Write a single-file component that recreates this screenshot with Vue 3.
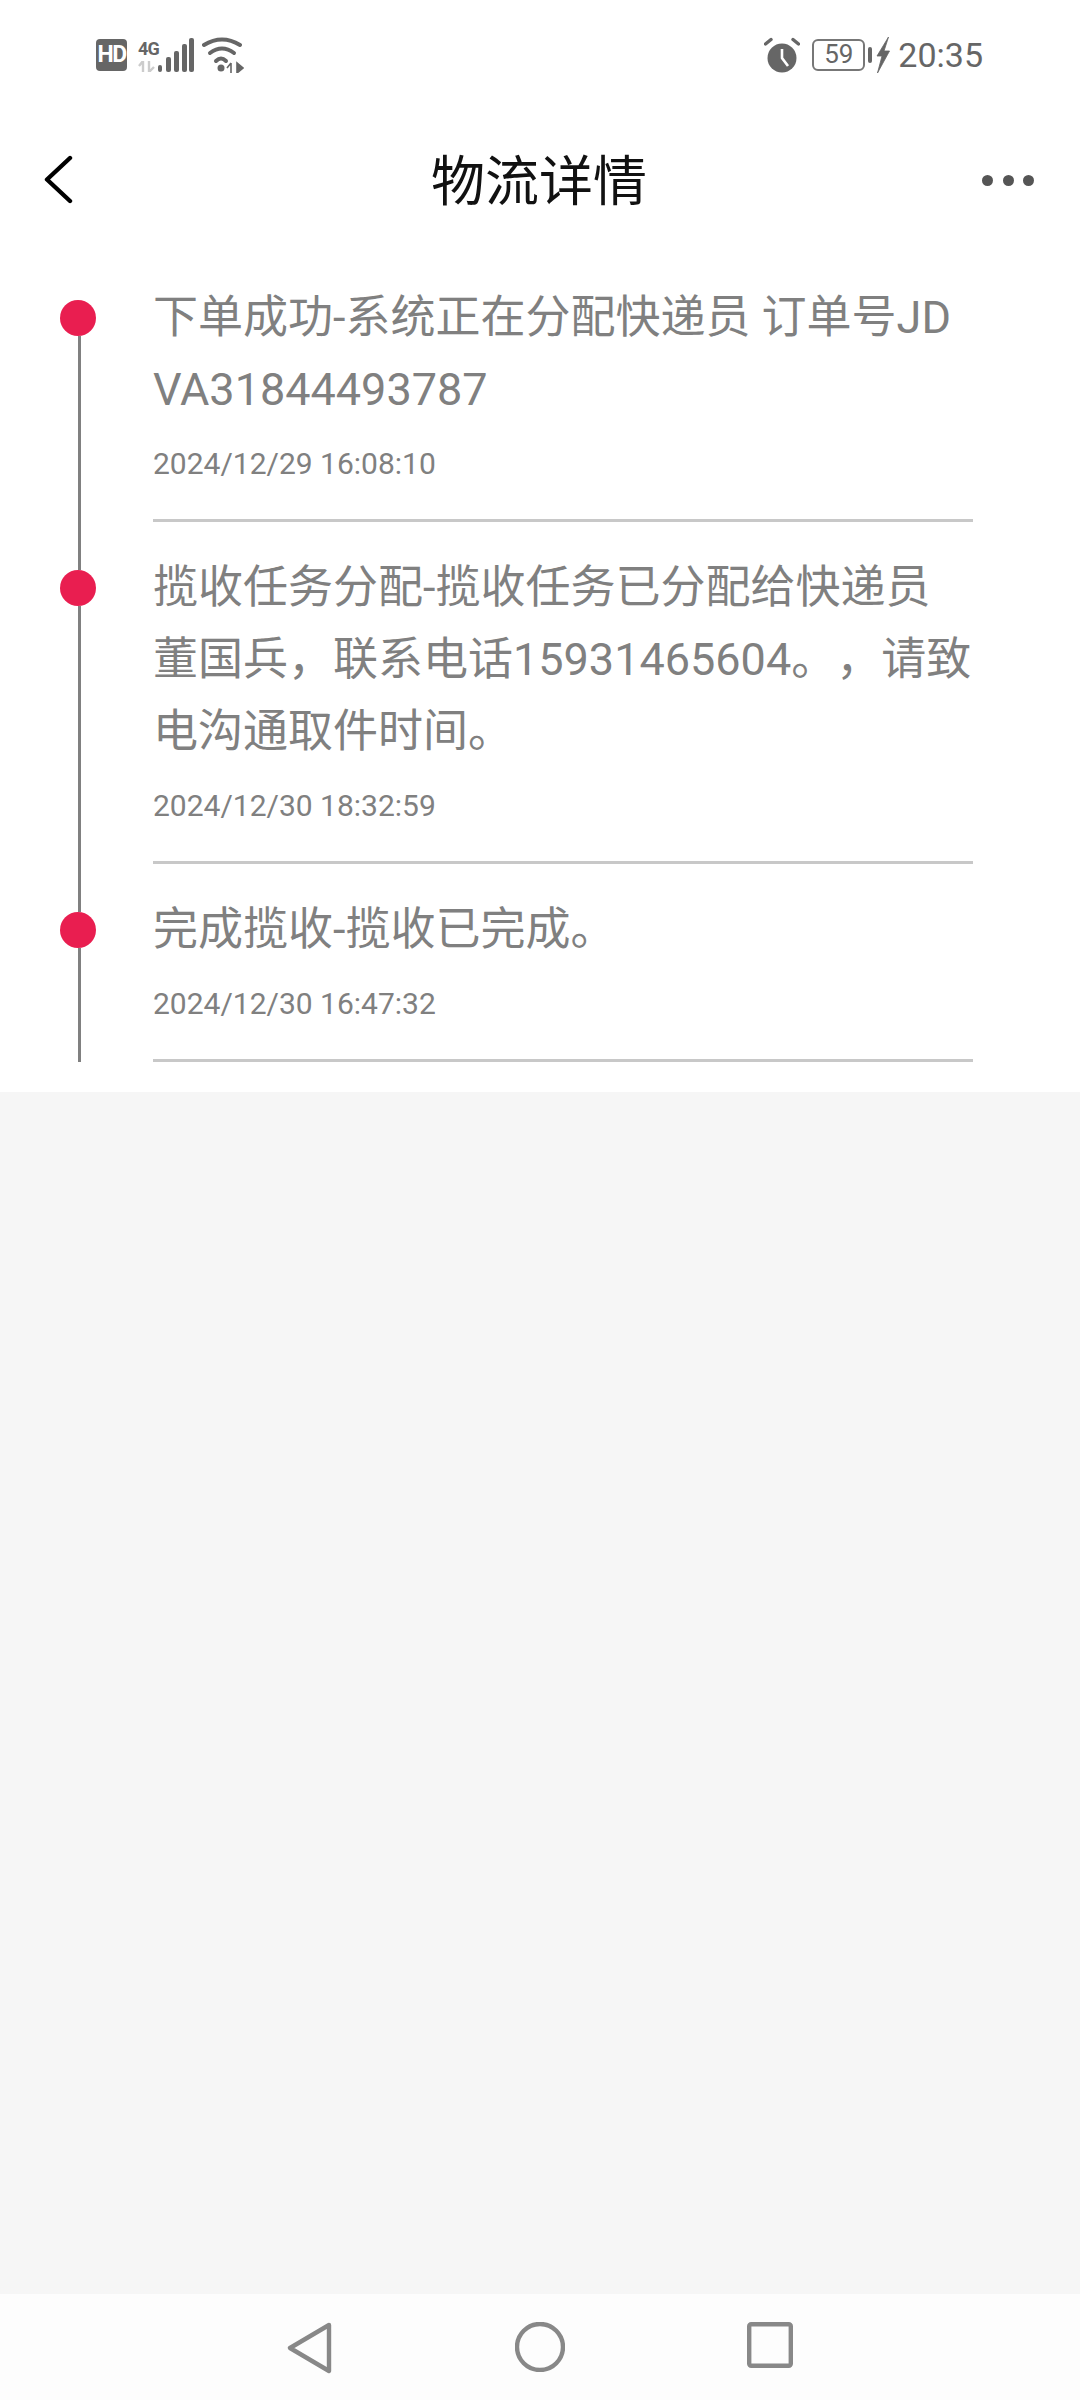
<template>
  <div class="page">
    <div class="status">
      <div class="status_left">
        <span class="hd">HD</span>
        <div class="net">
          <span class="net_label">4G</span>
          <svg class="net_arrows" width="18" height="11" viewBox="0 0 18 11">
            <path d="M5 0 L5 11 M1 5 L5 0 M11 0 L11 11 M11 11 L16 6" fill="none" stroke="#ccc" stroke-width="2.4" />
          </svg>
        </div>
        <svg class="bars" width="36" height="34" viewBox="0 0 36 34">
          <rect x="0" y="27" width="4" height="7" rx="2" fill="#666" />
          <rect x="8" y="19" width="5" height="15" rx="2" fill="#666" />
          <rect x="16" y="13" width="5" height="21" rx="2" fill="#666" />
          <rect x="24" y="6" width="5" height="28" rx="2" fill="#666" />
          <rect x="31" y="0" width="5" height="34" rx="2" fill="#666" />
        </svg>
        <svg class="wifi" width="42" height="36" viewBox="0 0 42 36">
          <path d="M2 8 Q20 -3 38 8" fill="none" stroke="#666" stroke-width="4" stroke-linecap="round" />
          <path d="M8 16 Q20 7 32 16" fill="none" stroke="#666" stroke-width="4" stroke-linecap="round" />
          <path d="M14 24 Q19 19 24 24" fill="none" stroke="#666" stroke-width="4" stroke-linecap="round" />
          <circle cx="19" cy="31" r="3.5" fill="#666" />
          <path d="M29 26 V36 M25 31 L29 26 M35 26 V36 L41 31 Z" fill="#666" stroke="#666" stroke-width="1.6" />
        </svg>
      </div>
      <div class="status_right">
        <svg class="alarm" width="36" height="36" viewBox="0 0 36 36">
          <circle cx="18" cy="21" r="14.5" fill="#666" />
          <path d="M18 12 V21 L24 29" fill="none" stroke="#fff" stroke-width="2.6" />
          <path d="M1.5 7 L7 2.5 M34.5 7 L29 2.5" fill="none" stroke="#666" stroke-width="3.4" stroke-linecap="round" />
        </svg>
        <div class="battery">
          <span class="battery_box">59</span>
          <span class="battery_tip"></span>
        </div>
        <svg class="bolt" width="14" height="36" viewBox="0 0 14 36">
          <path d="M12.5 0 L1 19 H6 L1.5 36 L13.5 14 H8 Z" fill="#666" stroke="#666" stroke-width="0.8" />
        </svg>
        <span class="clock">20:35</span>
      </div>
    </div>

    <div class="header">
      <div class="header_side">
        <svg class="back" width="30" height="50" viewBox="0 0 30 50">
          <path d="M26 3 L3 24.5 L26 46" fill="none" stroke="#000" stroke-width="4.4" stroke-linecap="round" stroke-linejoin="round" />
        </svg>
      </div>
      <div class="title">物流详情</div>
      <div class="header_side right">
        <div class="more"><i></i><i></i><i></i></div>
      </div>
    </div>

    <div class="list">
      <div v-for="(item, index) in steps" :key="item.time" class="step">
        <div class="rail">
          <div class="rail_top" :class="{ hidden: index === 0 }"></div>
          <div class="dot"></div>
          <div class="rail_bottom"></div>
        </div>
        <div class="body">
          <div class="desc">{{ item.desc }}</div>
          <div class="time">{{ item.time }}</div>
        </div>
      </div>
    </div>

    <div class="blank"></div>

    <div class="nav">
      <svg width="46" height="52" viewBox="0 0 46 52">
        <path d="M42 3 L3 26 L42 49 Z" fill="none" stroke="#888" stroke-width="4.4" stroke-linejoin="round" />
      </svg>
      <svg width="50" height="50" viewBox="0 0 50 50">
        <circle cx="25" cy="25" r="23" fill="none" stroke="#888" stroke-width="4.4" />
      </svg>
      <svg width="46" height="46" viewBox="0 0 46 46">
        <rect x="2.2" y="2.2" width="41.6" height="41.6" rx="2" fill="none" stroke="#888" stroke-width="4.4" />
      </svg>
    </div>
  </div>
</template>
<script setup>
const steps = [
  {
    desc: "下单成功-系统正在分配快递员 订单号JDVA31844493787",
    time: "2024/12/29 16:08:10",
  },
  {
    desc: "揽收任务分配-揽收任务已分配给快递员董国兵，联系电话15931465604。，请致电沟通取件时间。",
    time: "2024/12/30 18:32:59",
  },
  {
    desc: "完成揽收-揽收已完成。",
    time: "2024/12/30 16:47:32",
  },
];
</script>
<style>
html,
body {
  margin: 0;
  background: #fff;
}
</style>
<style scoped>
.page {
  width: 1080px;
  height: 2400px;
  display: flex;
  flex-direction: column;
  background: #fff;
  font-family: Roboto, "Noto Sans CJK SC", sans-serif;
}
.status {
  height: 110px;
  box-sizing: border-box;
  padding: 0 97px 0 96px;
  display: flex;
  justify-content: space-between;
  align-items: center;
}
.status_left,
.status_right {
  display: flex;
  align-items: center;
}
.hd {
  width: 31px;
  height: 32px;
  border-radius: 4px;
  background: #666;
  color: #fff;
  font-size: 23px;
  font-weight: 700;
  line-height: 32px;
  text-align: center;
  letter-spacing: -1.5px;
}
.net {
  margin-left: 11px;
  width: 20px;
  display: flex;
  flex-direction: column;
  gap: 3px;
}
.net_label {
  color: #666;
  font-size: 18px;
  font-weight: 700;
  line-height: 19px;
  letter-spacing: -0.8px;
}
.wifi {
  margin-left: 8px;
}
.status_right {
  color: #666;
}
.battery {
  margin-left: 12px;
  display: flex;
  align-items: center;
}
.battery_box {
  width: 53px;
  height: 32px;
  box-sizing: border-box;
  border: 2.5px solid #777;
  border-radius: 6px;
  font-size: 26px;
  line-height: 27px;
  text-align: center;
}
.battery_tip {
  width: 4px;
  height: 16px;
  margin-left: 3px;
  border-radius: 2px;
  background: #666;
}
.bolt {
  margin-left: 4px;
}
.clock {
  margin-left: 8px;
  font-size: 34px;
  line-height: 40px;
}
.header {
  height: 140px;
  box-sizing: border-box;
  padding: 0 46px 0 44px;
  display: flex;
  justify-content: space-between;
  align-items: center;
}
.header_side {
  width: 60px;
  display: flex;
}
.header_side.right {
  justify-content: flex-end;
}
.title {
  margin-top: 6px;
  color: #111;
  font-size: 54px;
  line-height: 70px;
}
.more {
  width: 52px;
  display: flex;
  justify-content: space-between;
}
.more i {
  width: 11px;
  height: 11px;
  border-radius: 50%;
  background: #555;
}
.list {
  padding: 2px 107px 30px 60px;
}
.step {
  display: flex;
}
.rail {
  width: 36px;
  display: flex;
  flex-direction: column;
  margin-right: 57px;
}
.rail_top {
  width: 3px;
  height: 48px;
  margin-left: 18px;
  background: #808080;
}
.rail_top.hidden {
  visibility: hidden;
}
.dot {
  width: 36px;
  height: 36px;
  border-radius: 50%;
  background: #e91e50;
}
.rail_bottom {
  width: 3px;
  flex: 1;
  margin-left: 18px;
  background: #808080;
}
.body {
  flex: 1;
  min-width: 0;
  padding: 30px 0 35px;
  border-bottom: 3px solid #c8c8c8;
}
.desc {
  color: #808080;
  font-size: 45px;
  line-height: 72px;
  word-break: break-all;
  text-spacing-trim: space-all;
}
.time {
  margin-top: 18px;
  color: #808080;
  font-size: 30px;
  line-height: 40px;
}
.blank {
  flex: 1;
  background: #f6f6f6;
}
.nav {
  height: 106px;
  box-sizing: border-box;
  padding: 28px 287px 0;
  display: flex;
  justify-content: space-between;
  align-items: flex-start;
  background: #fdfdfd;
}
</style>
